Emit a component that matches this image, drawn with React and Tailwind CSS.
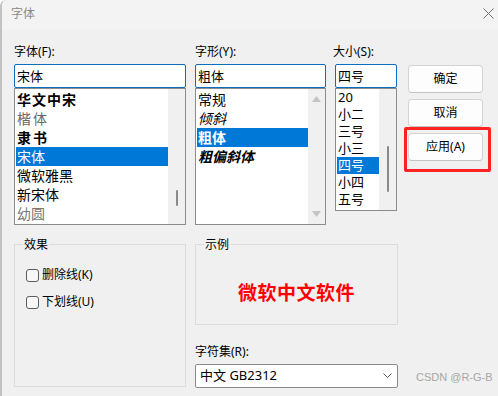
import React from 'react';

const FONT = "font-['Noto_Sans','Noto_Sans_CJK_SC',sans-serif]";

const fontItems = [
    { text: '华文中宋', className: 'font-bold tracking-[1px]' },
    { text: '楷体', className: 'text-[#6a6a6a] tracking-[2px]' },
    { text: '隶书', className: 'font-bold text-[12px] tracking-[2px]' },
    { text: '宋体', selected: true },
    { text: '微软雅黑' },
    { text: '新宋体' },
    { text: '幼圆', className: 'text-[#777]' },
];

const styleItems = [
    { text: '常规' },
    { text: '倾斜', className: 'italic' },
    { text: '粗体', className: 'font-bold', selected: true },
    { text: '粗偏斜体', className: 'font-bold italic' },
];

const sizeItems = ['20', '小二', '三号', '小三', '四号', '小四', '五号'];

// thin overlay scroll thumb like Win11
const Thumb = ({ top, height }) => (
    <div className="relative w-[17px] h-full bg-[#f0f0f0]">
        <div
            className="absolute left-[8px] w-[2px] rounded-full bg-[#8a8a8a]"
            style={{ top, height }}
        />
    </div>
);

const Label = ({ children }) => (
    <div className="h-[16px] leading-[16px] text-[12px] mb-[4px]">{children}</div>
);

const Input = ({ value }) => (
    <div className="h-[24px] border border-[#0a6fc2] rounded-[2px] bg-white pl-[2px] text-[13px] leading-[22px]">
        {value}
    </div>
);

const Button = ({ children }) => (
    <button className="h-[28px] w-full bg-[#fdfdfd] border border-[#d3d3d3] border-b-[#c4c4c4] rounded-[4px] text-[12px] text-black">
        {children}
    </button>
);

const GroupBox = ({ title, className = '', children }) => (
    <div className={`relative border border-[#dcdcdc] ${className}`}>
        <div className="absolute -top-[8px] left-[8px] bg-[#f0f0f0] text-[12px] leading-[16px] px-[1px]">
            {title}
        </div>
        {children}
    </div>
);

const Checkbox = ({ label }) => (
    <label className="flex items-center gap-[3px] h-[14px] text-[12px]">
        <span className="w-[13px] h-[13px] border border-[#5c5c5c] rounded-[3px] bg-[#f7f7f7]" />
        <span className="leading-[14px]">{label}</span>
    </label>
);

export default function App() {
    return (
        <div className={`${FONT} w-[498px] h-[396px] bg-[#f0f0f0] border-l-2 border-[#c2c2c2] rounded-tl-[6px] overflow-hidden text-black select-none`}>
            {/* Title bar */}
            <div className="h-[30px] bg-[#f3f3f3] flex items-center justify-between pl-[9px] pr-[4px]">
                <span className="text-[12px] text-[#8a8a8a] -mt-[3px]">字体</span>
                <svg width="11" height="11" viewBox="0 0 11 11" className="-mt-[4px]">
                    <path d="M0.5 0.5 L10.5 10.5 M10.5 0.5 L0.5 10.5" stroke="#6e6e6e" strokeWidth="1" />
                </svg>
            </div>

            {/* Top row */}
            <div className="flex pl-[12px] pt-[14px]">
                {/* Font column */}
                <div className="w-[172px]">
                    <Label>字体(F):</Label>
                    <Input value="宋体" />
                    <div className="h-[137px] border border-[#8c8c8c] bg-white flex">
                        <div className="flex-1 pt-[1px] pl-[1px]">
                            {fontItems.map((item) => (
                                <div
                                    key={item.text}
                                    className={`h-[19px] leading-[19px] text-[14px] pl-[1px] ${
                                        item.selected ? 'bg-[#0078d7] text-white' : ''
                                    } ${item.className || ''}`}
                                >
                                    {item.text}
                                </div>
                            ))}
                        </div>
                        <Thumb top={101} height={16} />
                    </div>
                </div>

                {/* Style column */}
                <div className="w-[131px] ml-[9px]">
                    <Label>字形(Y):</Label>
                    <Input value="粗体" />
                    <div className="h-[137px] border border-[#8c8c8c] bg-white flex">
                        <div className="flex-1 pt-[1px] pl-[1px]">
                            {styleItems.map((item) => (
                                <div
                                    key={item.text}
                                    className={`h-[19px] leading-[19px] text-[14px] pl-[1px] ${
                                        item.selected ? 'bg-[#0078d7] text-white' : ''
                                    } ${item.className || ''}`}
                                >
                                    {item.text}
                                </div>
                            ))}
                        </div>
                        <div className="w-[17px] h-full bg-[#f0f0f0] flex flex-col justify-between items-center py-[7px]">
                            <svg width="9" height="6" viewBox="0 0 9 6">
                                <path d="M4.5 0 L9 6 L0 6 Z" fill="#c4c4c4" />
                            </svg>
                            <svg width="9" height="6" viewBox="0 0 9 6">
                                <path d="M0 0 L9 0 L4.5 6 Z" fill="#c4c4c4" />
                            </svg>
                        </div>
                    </div>
                </div>

                {/* Size column */}
                <div className="w-[62px] ml-[9px]">
                    <div className="-ml-[2px]">
                        <Label>大小(S):</Label>
                    </div>
                    <Input value="四号" />
                    <div className="h-[123px] border border-[#8c8c8c] bg-white flex">
                        <div className="flex-1 pl-[1px]">
                            {sizeItems.map((s) => (
                                <div
                                    key={s}
                                    className={`h-[17px] leading-[17px] text-[13px] pl-[1px] ${
                                        s === '四号' ? 'bg-[#0078d7] text-white' : ''
                                    }`}
                                >
                                    {s}
                                </div>
                            ))}
                        </div>
                        <Thumb top={57} height={46} />
                    </div>
                </div>

                {/* Buttons */}
                <div className="w-[75px] ml-[11px] mt-[21px] relative flex flex-col gap-[6px]">
                    <Button>确定</Button>
                    <Button>取消</Button>
                    <Button>应用(A)</Button>
                    {/* annotation box */}
                    <div className="absolute left-[-4px] top-[62px] w-[87px] h-[45px] border-[3px] border-[#fe2222] rounded-[2px] pointer-events-none" />
                </div>
            </div>

            {/* Bottom row */}
            <div className="flex pl-[12px] mt-[19px]">
                <GroupBox title="效果" className="w-[172px] h-[143px]">
                    <div className="pl-[11px] pt-[23px] flex flex-col gap-[13px]">
                        <Checkbox label="删除线(K)" />
                        <Checkbox label="下划线(U)" />
                    </div>
                </GroupBox>

                <div className="w-[203px] ml-[9px]">
                    <GroupBox title="示例" className="h-[81px]">
                        <div className="flex justify-center pt-[34px]">
                            <span className="text-[19px] leading-[28px] font-bold text-[#ff0000] tracking-[0.5px]">
                                微软中文软件
                            </span>
                        </div>
                    </GroupBox>
                    <div className="mt-[19px]">
                        <Label>字符集(R):</Label>
                    </div>
                    <div className="h-[24px] border border-[#8a8a8a] rounded-[2px] bg-white flex items-center justify-between pl-[4px] pr-[5px]">
                        <span className="text-[13px]">中文 GB2312</span>
                        <svg width="9" height="6" viewBox="0 0 9 6">
                            <path d="M0.5 0.5 L4.5 4.5 L8.5 0.5" stroke="#555" strokeWidth="1" fill="none" />
                        </svg>
                    </div>
                </div>

                <div className="flex-1 flex items-end justify-start pl-[18px] pb-[3px]">
                    <span className="font-['Liberation_Sans',sans-serif] text-[11px] text-[#a6a6a6]">CSDN @R-G-B</span>
                </div>
            </div>
        </div>
    );
}
